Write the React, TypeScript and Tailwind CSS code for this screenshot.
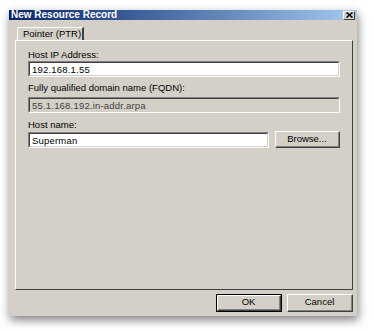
const font = "font-['Liberation_Sans',Arial,sans-serif]";

const Sunken = ({ value, disabled, className }: { value: string; disabled?: boolean; className?: string }) => (
  <div
    className={`h-[16px] border-t border-l border-t-[#808080] border-l-[#808080] border-b border-r border-b-white border-r-white ${className ?? ""}`}
  >
    <div
      className={`h-full border-t border-l border-t-[#404040] border-l-[#404040] border-b border-r border-b-[#d4d0c8] border-r-[#d4d0c8] px-[2px] text-[9.5px] leading-[13px] tracking-[0.2px] ${
        disabled ? "bg-[#d4d0c8] text-[#404040]" : "bg-white text-black"
      }`}
    >
      {value}
    </div>
  </div>
);

const Button = ({ label, isDefault, className }: { label: string; isDefault?: boolean; className?: string }) => (
  <div className={`${isDefault ? "border border-black" : ""} ${className ?? ""}`}>
    <div className="h-full border-t border-l border-t-white border-l-white border-b border-r border-b-[#404040] border-r-[#404040]">
      <div className="h-full border-b border-r border-b-[#808080] border-r-[#808080] flex items-center justify-center text-[9.5px] text-black">
        {label}
      </div>
    </div>
  </div>
);

export default function App() {
  return (
    <div className={`w-[374px] h-[331px] bg-white pt-[10px] pl-[9px] ${font}`}>
      <div className="w-[348px] h-[306px] bg-[#d4d0c8] flex flex-col shadow-[1px_4px_9px_rgba(0,0,0,0.5)]">
        {/* Title bar */}
        <div className="h-[10px] flex items-center justify-between bg-gradient-to-r from-[#0a246a] to-[#a6caf0] pl-[2px] pr-[2px]">
          <span className="text-white font-bold text-[10px] leading-[10px] whitespace-nowrap">New Resource Record</span>
          <div className="w-[12px] h-[9px] bg-[#d4d0c8] border-t border-l border-t-white border-l-white border-b border-r border-b-[#404040] border-r-[#404040] flex items-center justify-center">
            <svg width="7" height="6" viewBox="0 0 7 6">
              <path d="M0.5 0.5 L6.5 5.5 M6.5 0.5 L0.5 5.5" stroke="black" strokeWidth="1.6" />
            </svg>
          </div>
        </div>

        <div className="flex-1 flex flex-col pl-[6px] pr-[4px] pt-[7px]">
          {/* Tab */}
          <div className="flex">
            <div className="ml-[2px] w-[67px] h-[13px] border-t border-l border-t-white border-l-white border-r-2 border-r-[#404040] rounded-tl-[2px] flex items-center pl-[5px] text-[9.5px] text-black whitespace-nowrap">
              Pointer (PTR)
            </div>
          </div>

          {/* Panel */}
          <div className="h-[250px] border-t border-l border-t-white border-l-white border-b border-r border-b-[#404040] border-r-[#404040] pl-[12px] pr-[12px] pt-[8px] text-[9.5px] text-black">
            <div className="leading-[12px]">Host IP Address:</div>
            <Sunken value="192.168.1.55" className="w-[312px]" />
            <div className="leading-[12px] mt-[5px]">Fully qualified domain name (FQDN):</div>
            <Sunken value="55.1.168.192.in-addr.arpa" disabled className="w-[312px] mt-[3px]" />
            <div className="leading-[12px] mt-[6px]">Host name:</div>
            <div className="flex items-center gap-[6px]">
              <Sunken value="Superman" className="w-[241px]" />
              <Button label="Browse..." className="w-[65px] h-[17px]" />
            </div>
          </div>

          {/* Bottom buttons */}
          <div className="flex justify-end gap-[5px] mt-[4px]">
            <Button label="OK" isDefault className="w-[66px] h-[18px]" />
            <Button label="Cancel" className="w-[66px] h-[18px]" />
          </div>
        </div>
      </div>
    </div>
  );
}
